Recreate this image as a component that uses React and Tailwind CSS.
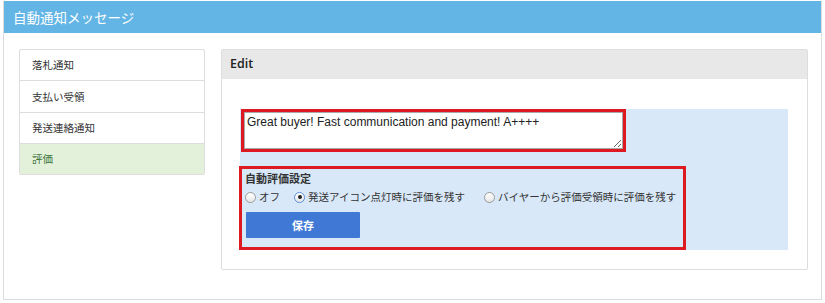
import { useState } from 'react';

const jp = { fontFamily: '"Noto Sans CJK JP", "Noto Sans", sans-serif' };

const items = ['落札通知', '支払い受領', '発送連絡通知', '評価'];

function Radio({ checked, label, onClick }) {
  return (
    <label className="flex items-center cursor-pointer" onClick={onClick}>
      <span
        className={`w-[11px] h-[11px] rounded-full border flex items-center justify-center bg-gradient-to-b from-white to-[#e6e6e6] ${
          checked ? 'border-[#5b8fd6]' : 'border-[#9a9a9a]'
        }`}
      >
        {checked && <span className="w-[4px] h-[4px] rounded-full bg-[#222]"></span>}
      </span>
      <span className="ml-[3px] text-[10.5px] text-[#333]">{label}</span>
    </label>
  );
}

export default function App() {
  const [active, setActive] = useState(3);
  const [mode, setMode] = useState(1);

  return (
    <div className="w-[825px] h-[303px] bg-white px-[3px] pt-[1px] pb-[3px]" style={jp}>
      <div className="h-full border border-[#dcdcdc] border-t-0 bg-white">
        <div className="h-[32px] bg-[#63b5e5] flex items-center pl-[9px] text-white text-[13.5px]">
          自動通知メッセージ
        </div>
        <div className="flex pt-[16px] pl-[15px] gap-[16px]">
          <div className="w-[186px] h-[126px] border border-[#dddddd] rounded-[2px] flex flex-col">
            {items.map((item, index) => (
              <div
                key={index}
                onClick={() => setActive(index)}
                className={`flex-1 flex items-center pl-[12px] text-[10.5px] ${
                  index > 0 ? 'border-t border-[#dddddd]' : ''
                } ${active === index ? 'bg-[#e4f1da] text-[#3c763d]' : 'text-[#333]'}`}
              >
                {item}
              </div>
            ))}
          </div>

          <div className="w-[587px] h-[221px] border border-[#dddddd] rounded-[2px] flex flex-col">
            <div
              className="h-[32px] bg-[#e8e8e8] flex items-center pl-[8px] text-[12.5px] font-semibold text-[#222]"
              style={{ fontFamily: '"Open Sans", "Noto Sans", sans-serif' }}
            >
              Edit
            </div>
            <div className="flex-1 pt-[30px] pl-[18px] pr-[19px] pb-[19px]">
              <div className="h-full bg-[#d8e8f8] flex flex-col">
                <div className="w-[385px] h-[43px] ml-[1px] border-[3px] border-[#dd1a22]">
                  <textarea
                    defaultValue="Great buyer! Fast communication and payment! A++++"
                    className="w-full h-full block border border-[#a9a9a9] bg-white px-[2px] py-[1px] text-[12px] text-[#222] leading-[16px] outline-none"
                    style={{ fontFamily: '"Liberation Sans", Arial, sans-serif' }}
                  />
                </div>
                <div className="mt-[14px] -ml-[1px] w-[447px] h-[84px] border-[3px] border-[#dd1a22] pl-[3px] pt-[1px]">
                  <div className="text-[11px] font-bold text-[#333] leading-[16px]">自動評価設定</div>
                  <div className="flex items-center mt-[2px] h-[18px]">
                    <Radio checked={mode === 0} label="オフ" onClick={() => setMode(0)} />
                    <div className="w-[14px]"></div>
                    <Radio checked={mode === 1} label="発送アイコン点灯時に評価を残す" onClick={() => setMode(1)} />
                    <div className="w-[19px]"></div>
                    <Radio checked={mode === 2} label="バイヤーから評価受領時に評価を残す" onClick={() => setMode(2)} />
                  </div>
                  <button className="mt-[6px] w-[114px] h-[26px] bg-[#3f78d5] text-white text-[11px] font-bold rounded-[1px] ml-[1px]">
                    保存
                  </button>
                </div>
              </div>
            </div>
          </div>
        </div>
      </div>
    </div>
  );
}
